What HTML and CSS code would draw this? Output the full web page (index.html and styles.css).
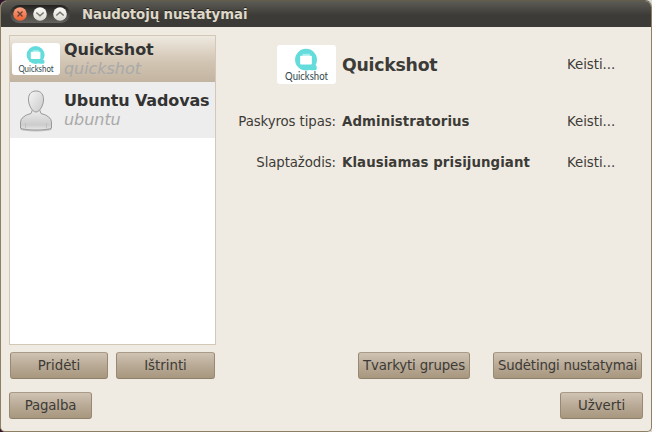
FILE: index.html
```html
<!DOCTYPE html>
<html lang="lt">
<head>
<meta charset="utf-8">
<title>Naudotojų nustatymai</title>
<link rel="stylesheet" href="styles.css">
</head>
<body>
<svg class="defs" width="0" height="0">
  <defs>
    <linearGradient id="orange" x1="0" y1="0" x2="0" y2="1"><stop offset="0" stop-color="#f9a384"/><stop offset="1" stop-color="#ed6032"/></linearGradient>
    <linearGradient id="light" x1="0" y1="0" x2="0" y2="1"><stop offset="0" stop-color="#fffefa"/><stop offset="1" stop-color="#dad7d0"/></linearGradient>
    <linearGradient id="head" x1="0" y1="0" x2="1" y2="1"><stop offset="0" stop-color="#f6f6f6"/><stop offset="1" stop-color="#c9c9c9"/></linearGradient>
    <linearGradient id="torso" x1="0" y1="0" x2="0" y2="1"><stop offset="0" stop-color="#eeeeee"/><stop offset=".75" stop-color="#cccccc"/><stop offset="1" stop-color="#e8e8e8"/></linearGradient>
    <symbol id="quickshot" viewBox="0 0 60 40">
      <circle cx="29.500" cy="15" r="11.200" fill="#64dcdc"/>
      <rect x="33" y="20.500" width="7.500" height="5.500" rx="2" fill="#64dcdc"/>
      <path fill="#a5eeee" d="M26 9h7.500v2.500h-7.500z"/>
      <rect x="23.500" y="11" width="12" height="9" rx="1" fill="#fff"/>
      <text x="30" y="36" text-anchor="middle" textLength="44" lengthAdjust="spacingAndGlyphs" font-family="Lato" font-size="12" fill="#31474a">Quickshot</text>
    </symbol>
  </defs>
</svg>
<div class="window">
  <header class="titlebar">
    <div class="controls">
      <svg width="14" height="14" viewBox="0 0 14 14"><circle cx="7" cy="7" r="6.800" fill="url(#orange)"/><path d="M4.500 4.500l5 5M9.500 4.500l-5 5" stroke="#6b4034" stroke-width="1.400"/></svg>
      <svg width="14" height="14" viewBox="0 0 14 14"><circle cx="7" cy="7" r="6.800" fill="url(#light)"/><path d="M3.300 5.500L7 8.800l3.700-3.300" fill="none" stroke="#77746d" stroke-width="1.500"/></svg>
      <svg width="14" height="14" viewBox="0 0 14 14"><circle cx="7" cy="7" r="6.800" fill="url(#light)"/><path d="M3.300 8.500L7 5.200l3.700 3.300" fill="none" stroke="#77746d" stroke-width="1.500"/></svg>
    </div>
    <h1 class="title">Naudotojų nustatymai</h1>
  </header>
  <main class="content">
    <section class="panes">
      <aside class="sidebar">
        <ul class="users">
          <li class="user selected">
            <div class="picture small"><svg class="logo"><use href="#quickshot"/></svg></div>
            <div class="names"><b>Quickshot</b><i>quickshot</i></div>
          </li>
          <li class="user">
            <svg class="avatar" width="48" height="48" viewBox="0 0 48 48">
              <ellipse cx="24" cy="43" rx="16" ry="2.500" fill="#c2c2c2"/>
              <path d="M8.500 42V36Q9 30 19 27.500L20.500 23.500h7l1.500 4Q39 30 39.500 36V42Q37 44 24 44T8.500 42z" fill="url(#torso)" stroke="#999" stroke-width="1"/>
              <path d="M13.500 37v5.500M34.500 37v5.500" stroke="#bbb" stroke-width=".8"/>
              <path d="M24 5c-5.500 0-7.700 4-7.500 9 .2 5 3.500 12 7.500 12s7.300-7 7.500-12c.2-5-2-9-7.500-9z" fill="url(#head)" stroke="#999" stroke-width="1"/>
            </svg>
            <div class="names"><b class="tight">Ubuntu Vadovas</b><i>ubuntu</i></div>
          </li>
        </ul>
        <div class="side-actions"><button>Pridėti</button><button>Ištrinti</button></div>
      </aside>
      <section class="details">
        <div class="fields">
          <div class="cell-right"><div class="picture large"><svg class="logo"><use href="#quickshot"/></svg></div></div>
          <b class="full-name">Quickshot</b>
          <span class="change">Keisti...</span>
          <span class="label">Paskyros tipas:</span>
          <b class="value">Administratorius</b>
          <span class="change">Keisti...</span>
          <span class="label">Slaptažodis:</span>
          <b class="value">Klausiamas prisijungiant</b>
          <span class="change">Keisti...</span>
        </div>
        <div class="detail-actions"><button class="groups">Tvarkyti grupes</button><button class="advanced">Sudėtingi nustatymai</button></div>
      </section>
    </section>
    <footer class="footer"><button>Pagalba</button><button>Užverti</button></footer>
  </main>
</div>
</body>
</html>
```
FILE: styles.css
```css
* { box-sizing: border-box; }
html { background: linear-gradient(to right, #30122b 50%, #d8d8d4 50%); }
body { margin: 0; width: 652px; height: 432px; overflow: hidden; font: 13.333px "DejaVu Sans", sans-serif; color: #3c3b37; }
.defs { position: absolute; }
.window { width: 652px; height: 432px; border: 1px solid #8d8064; border-top-color: #655d4c; border-radius: 7px 7px 5px 5px; overflow: hidden; background: #f0ebe2; display: flex; flex-direction: column; }
.titlebar { height: 26px; flex: none; display: flex; align-items: center; padding-left: 9px; background: linear-gradient(#5c5b54, #3c3b37 55%); }
.controls { display: flex; gap: 6px; width: 60px; height: 18px; padding: 2px 3px; border-radius: 9px; background: linear-gradient(#22211e, #65645f); }
.title { margin: 2px 0 0 12px; font-size: 13.333px; line-height: 18px; letter-spacing: -.1px; color: #dfd8c8; white-space: nowrap; text-shadow: 0 -1px #24231f; }
.content { flex: 1; display: flex; flex-direction: column; padding: 8px 8px 12px; }
.panes { display: flex; height: 344px; }
.sidebar { width: 207px; }
.users { list-style: none; margin: 0; padding: 0; height: 310px; border: 1px solid #d2c8b5; background: #fff; }
.user { display: flex; align-items: center; height: 56px; padding-left: 2px; background: #ededed; }
.user.selected { height: 46px; background: linear-gradient(#eee9e0, #d2c5b3 55%, #c2b4a0); }
.picture { background: #fff; border-radius: 3px; flex: none; }
.small { width: 48px; height: 32px; }
.large { width: 59px; height: 39px; }
.logo { display: block; width: 100%; height: 100%; }
.avatar { flex: none; }
.names { margin-left: 4px; display: flex; flex-direction: column; white-space: nowrap; font-size: 16px; line-height: 19px; letter-spacing: -.05px; }
.names b { color: #333; }
.names .tight { letter-spacing: -.13px; }
.names i { color: #a9a9a9; }
.side-actions { display: flex; gap: 8px; margin: 7px 1px 0; }
.side-actions button { width: 98px; }
.side-actions button:last-child { width: 99px; }
button { height: 27px; padding: 0 0 1px; border: 1px solid #9b8a74; border-color: #a99b87 #998973 #8f8069; border-radius: 3px; background: linear-gradient(#cfc3b3, #b9aa96 50%, #a8977f); font: inherit; color: #3c3b37; white-space: nowrap; display: flex; justify-content: center; align-items: center; }
.details { flex: 1; display: flex; flex-direction: column; justify-content: space-between; margin-left: 21px; }
.fields { display: grid; grid-template-columns: 99px 231px auto; grid-template-rows: 58px 57px 25px; align-items: center; white-space: nowrap; }
.cell-right { display: flex; justify-content: flex-end; }
.label { text-align: right; letter-spacing: -.1px; }
.change { letter-spacing: -.05px; }
.full-name, .value { padding-left: 6px; }
.value { letter-spacing: .08px; }
.full-name { font-size: 17.333px; letter-spacing: -.25px; padding-top: 2px; }
.detail-actions { display: flex; justify-content: flex-end; gap: 23px; margin-right: 1px; }
.groups { width: 112px; letter-spacing: -.13px; }
.advanced { width: 149px; letter-spacing: -.18px; }
.footer { display: flex; justify-content: space-between; margin-top: 13px; }
.footer button { width: 83px; }
.footer button:first-child { letter-spacing: -.15px; }
```
